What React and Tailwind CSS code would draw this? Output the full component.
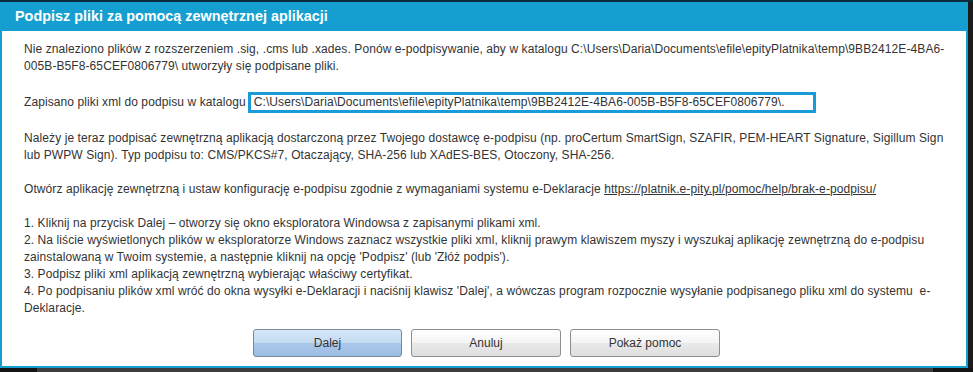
import React from 'react';

// Dialog: "Podpisz pliki za pomocą zewnętrznej aplikacji"
const folder = 'C:\\Users\\Daria\\Documents\\efile\\epityPlatnika\\temp\\9BB2412E-4BA6-005B-B5F8-65CEF0806779\\.';

const Button = ({ primary = false, children }) => (
  <button
    className={
      primary
        ? 'w-[149px] h-[28px] rounded-[3px] border border-[#7b8898] bg-[linear-gradient(to_bottom,#d6e7f7_0%,#c4dbf2_48%,#aac8ea_52%,#9bbce3_100%)] text-[12px] text-[#333]'
        : 'w-[150px] h-[28px] rounded-[3px] border border-[#8e8e8e] bg-[linear-gradient(to_bottom,#ffffff_0%,#f4f4f4_48%,#e9e9e9_52%,#dedede_100%)] text-[12px] text-[#333]'
    }
  >
    {children}
  </button>
);

const App = () => {
  return (
    <div className="w-[973px] h-[372px] bg-[#1b1b1b] flex flex-col overflow-hidden font-['Liberation_Sans',Arial,sans-serif]">
      {/* top edge of the page behind the dialog */}
      <div className="h-[2px] bg-[#0c2b3b] shrink-0" />

      <div className="flex flex-1 min-h-0">
        <div className="w-[968px] h-[366px] bg-[#159fd1] flex flex-col px-[2px] pb-[2px]">
          {/* Title bar */}
          <div className="h-[29px] shrink-0 flex items-center pl-[13px]">
            <h1 className="text-[14.4px] font-bold text-white leading-none">
              Podpisz pliki za pomocą zewnętrznej aplikacji
            </h1>
          </div>

          {/* Body */}
          <div className="flex-1 bg-white flex flex-col pt-[10px] pl-[22px] pr-[10px] pb-[9px] text-[12px] leading-[17px] tracking-[0.09px] text-[#333]">
            <p className="mb-[17px]">
              Nie znaleziono plików z rozszerzeniem .sig, .cms lub .xades. Ponów e-podpisywanie, aby w katalogu C:\Users\Daria\Documents\efile\epityPlatnika\temp\9BB2412E-4BA6-
              <br />
              005B-B5F8-65CEF0806779\ utworzyły się podpisane pliki.
            </p>

            <div className="mb-[17px] flex items-center gap-[2px]">
              <span>Zapisano pliki xml do podpisu w katalogu</span>
              <div className="w-[568px] h-[21px] border-[3px] border-[#1a9bd8] pl-[3px] flex items-center">
                {folder}
              </div>
            </div>

            <p className="mb-[17px]">
              Należy je teraz podpisać zewnętrzną aplikacją dostarczoną przez Twojego dostawcę e-podpisu (np. proCertum SmartSign, SZAFIR, PEM-HEART Signature, Sigillum Sign
              <br />
              lub PWPW Sign). Typ podpisu to: CMS/PKCS#7, Otaczający, SHA-256 lub XAdES-BES, Otoczony, SHA-256.
            </p>

            <p className="mb-[17px]">
              Otwórz aplikację zewnętrzną i ustaw konfigurację e-podpisu zgodnie z wymaganiami systemu e-Deklaracje{' '}
              <a href="#" className="underline">https://platnik.e-pity.pl/pomoc/help/brak-e-podpisu/</a>
            </p>

            <p>
              1. Kliknij na przycisk Dalej – otworzy się okno eksploratora Windowsa z zapisanymi plikami xml.
              <br />
              2. Na liście wyświetlonych plików w eksploratorze Windows zaznacz wszystkie pliki xml, kliknij prawym klawiszem myszy i wyszukaj aplikację zewnętrzną do e-podpisu
              <br />
              zainstalowaną w Twoim systemie, a następnie kliknij na opcję 'Podpisz' (lub 'Złóż podpis').
              <br />
              3. Podpisz pliki xml aplikacją zewnętrzną wybierając właściwy certyfikat.
              <br />
              4. Po podpisaniu plików xml wróć do okna wysyłki e-Deklaracji i naciśnij klawisz 'Dalej', a wówczas program rozpocznie wysyłanie podpisanego pliku xml do systemu&nbsp; e-
              <br />
              Deklaracje.
            </p>

            <div className="mt-auto flex gap-[9px] pl-[229px] tracking-normal">
              <Button primary>Dalej</Button>
              <Button>Anuluj</Button>
              <Button>Pokaż pomoc</Button>
            </div>
          </div>
        </div>
        <div className="flex-1" />
      </div>

      {/* bottom edge of the page */}
      <div className="h-[4px] shrink-0 flex">
        <div className="w-[37px] bg-[#141414]" />
        <div className="w-[896px] bg-[#3d3d3d]" />
        <div className="flex-1 bg-[#141414]" />
      </div>
    </div>
  );
};

export default App;
